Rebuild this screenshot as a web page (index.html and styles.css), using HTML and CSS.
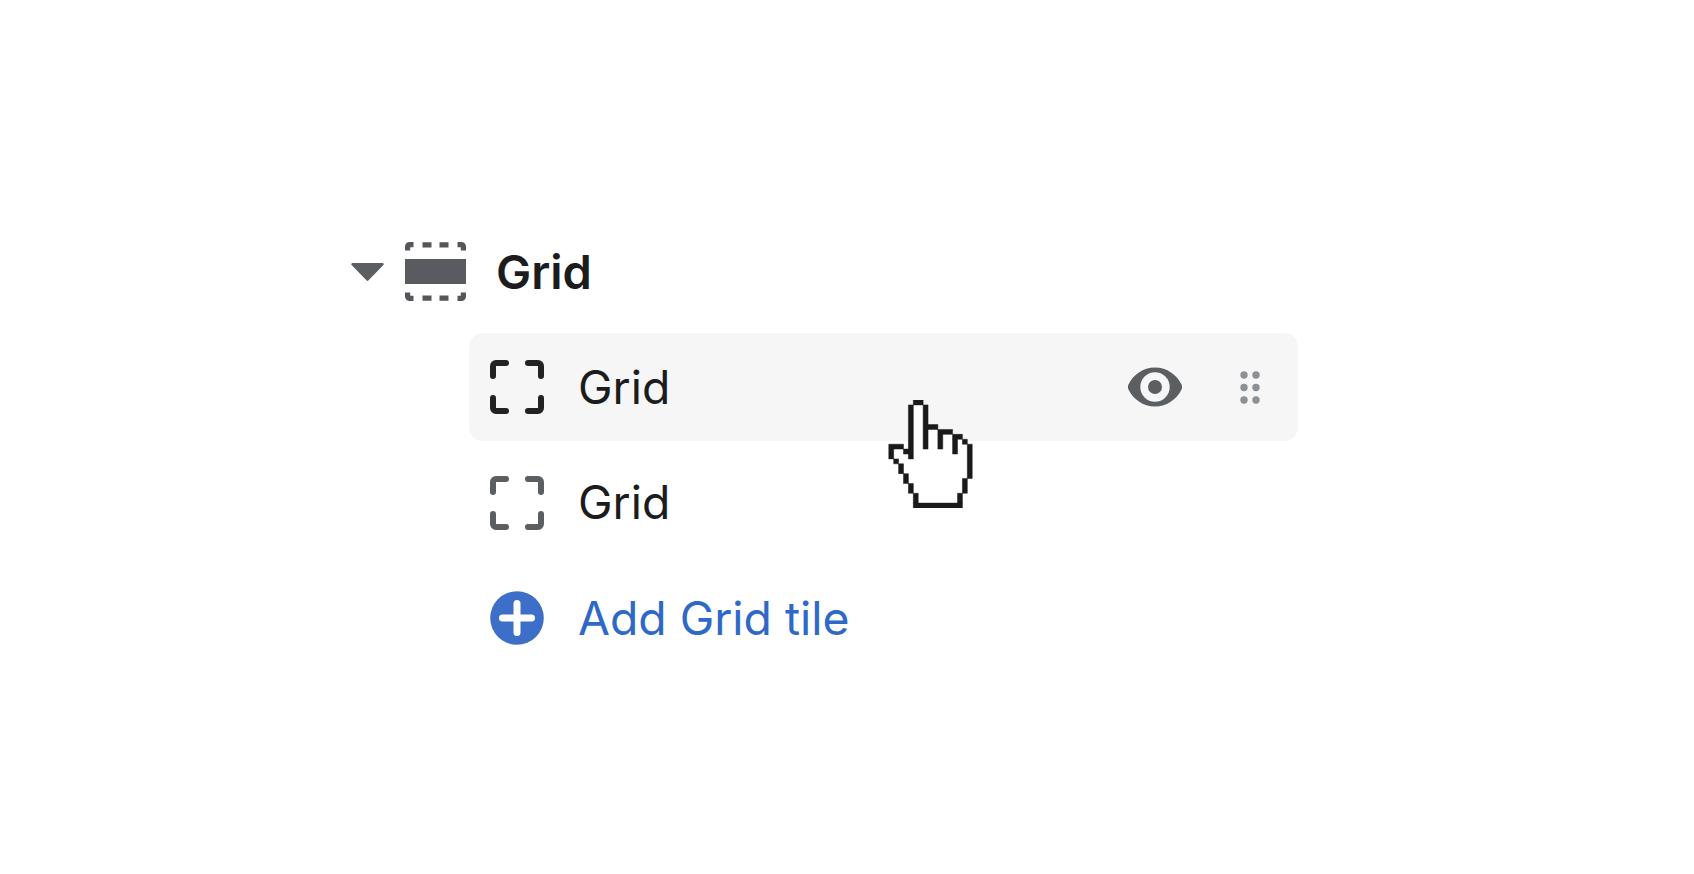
FILE: index.html
```html
<!DOCTYPE html>
<html lang="en">
<head>
<meta charset="utf-8">
<title>Grid</title>
<link rel="stylesheet" href="styles.css">
</head>
<body>
<main class="tree">
  <div class="section">
    <svg class="caret" viewBox="0 0 33 18" aria-hidden="true"><path d="M1.500 0h30a1.200 1.200 0 0 1 .9 2L17.600 17.300a1.500 1.500 0 0 1-2.200 0L.6 2a1.200 1.200 0 0 1 .9-2z"/></svg>
    <svg class="banner" viewBox="0 0 61 59" aria-hidden="true">
      <rect class="solid" x="0" y="17" width="61" height="25"/>
      <path class="dash" d="M2.600 8.500V4.600a2 2 0 0 1 2-2h3.900M52.500 2.600h3.900a2 2 0 0 1 2 2v3.900M2.600 50.500v3.900a2 2 0 0 0 2 2h3.900M52.500 56.400h3.900a2 2 0 0 0 2-2v-3.900M17.500 2.800h9M34.500 2.800h9M17.500 56.200h9M34.500 56.200h9"/>
    </svg>
    <span class="section-name">Grid</span>
  </div>
  <ul class="rows">
    <li class="row row-hover">
      <svg class="frame frame-dark" viewBox="0 0 54 54" aria-hidden="true"><path d="M3 16V6a3 3 0 0 1 3-3h10M38 3h10a3 3 0 0 1 3 3v10M3 38v10a3 3 0 0 0 3 3h10M38 51h10a3 3 0 0 0 3-3V38"/></svg>
      <span class="row-label">Grid</span>
      <div class="actions">
        <svg class="eye" viewBox="0 0 54 40" aria-hidden="true">
          <path class="eye-shape" d="M.5 17.500C5 8 15 .5 27 .5S49 8 53.500 17.500a5.500 5.500 0 0 1 0 5C49 32 39 39.500 27 39.500S5 32 .5 22.500a5.500 5.500 0 0 1 0-5z"/>
          <circle class="eye-ring" cx="27" cy="20" r="14.700"/>
          <circle class="eye-shape" cx="27" cy="20" r="7"/>
        </svg>
        <svg class="drag" viewBox="0 0 20 33" aria-hidden="true">
          <circle cx="4" cy="4" r="3.700"/><circle cx="16" cy="4" r="3.700"/>
          <circle cx="4" cy="16.500" r="3.700"/><circle cx="16" cy="16.500" r="3.700"/>
          <circle cx="4" cy="29" r="3.700"/><circle cx="16" cy="29" r="3.700"/>
        </svg>
      </div>
    </li>
    <li class="row">
      <svg class="frame frame-grey" viewBox="0 0 54 54" aria-hidden="true"><path d="M3 16V6a3 3 0 0 1 3-3h10M38 3h10a3 3 0 0 1 3 3v10M3 38v10a3 3 0 0 0 3 3h10M38 51h10a3 3 0 0 0 3-3V38"/></svg>
      <span class="row-label">Grid</span>
    </li>
    <li class="row">
      <svg class="plus" viewBox="0 0 54 54" aria-hidden="true">
        <circle class="plus-disc" cx="27" cy="27" r="26.800"/>
        <path class="plus-mark" d="M27 12.500v29M12.500 27h29"/>
      </svg>
      <span class="row-label row-link">Add Grid tile</span>
    </li>
  </ul>
  <svg class="cursor" viewBox="0 0 17 22" aria-hidden="true">
    <path class="cursor-fill" d="M5 0h2v5h3v1h3v1h2v1h1v1h1v7h-1v3h-1v3H5v-3H4v-2H3v-2H2v-2H1v-1H0V9h4V1h1z"/>
    <path class="cursor-line" d="M5 0h2v1H5zM4 1h1v11H4zM7 1h1v9H7zM8 5h2v1H8zM10 6h3v1h-3zM10 7h1v3h-1zM13 7h2v1h-2zM13 8h1v3h-1zM15 8h1v1h-1zM16 9h1v7h-1zM15 16h1v3h-1zM14 19h1v2h-1zM5 21h10v1H5zM5 19h1v2H5zM4 17h1v2H4zM3 15h1v2H3zM2 13h1v2H2zM1 12h1v1H1zM0 9h1v3H0zM1 9h2v1H1zM3 10h1v1H3z"/>
  </svg>
</main>
</body>
</html>
```
FILE: styles.css
```css
* { box-sizing: border-box; }

html, body {
  margin: 0;
  height: 100%;
  background: #fff;
}

body {
  font-family: Inter, "Liberation Sans", sans-serif;
  color: #1c1c1e;
  overflow: hidden;
}

.tree {
  position: relative;
  height: 874px;
  padding: 217px 0 0 351px;
}

.section {
  display: flex;
  align-items: center;
  height: 108px;
  margin-bottom: 8px;
}

.caret {
  width: 33px;
  height: 18px;
  margin: 2px 21px 0 0;
  fill: #5c5f62;
}

.banner {
  width: 61px;
  height: 59px;
  margin-right: 30px;
}

.solid { fill: #5a5b60; }

.dash {
  fill: none;
  stroke: #55565b;
  stroke-width: 5.200;
}

.section-name {
  font-size: 47px;
  font-weight: 600;
  line-height: 1;
}

.rows {
  list-style: none;
  margin: 0 0 0 118px;
  padding: 0;
  width: 829px;
  display: flex;
  flex-direction: column;
  gap: 7.500px;
}

.row {
  display: flex;
  align-items: center;
  height: 108px;
  padding: 0 38px 0 21px;
  border-radius: 14px;
}

.row-hover { background: #f6f6f7; }

.frame, .plus {
  width: 54px;
  height: 54px;
  margin-right: 34px;
  flex: none;
}

.frame path {
  fill: none;
  stroke-width: 6;
  stroke-linecap: round;
}

.frame-dark path { stroke: #202223; }
.frame-grey path { stroke: #5c5f62; }

.row-label {
  font-size: 46.300px;
  font-weight: 400;
  line-height: 1;
}

.row-link { color: #2f69c8; }

.plus-disc { fill: #3d6fc9; }

.plus-mark {
  fill: none;
  stroke: #fff;
  stroke-width: 7;
  stroke-linecap: round;
}

.actions {
  display: flex;
  align-items: center;
  gap: 58px;
  margin-left: auto;
}

.eye {
  width: 54px;
  height: 40px;
}

.eye-shape { fill: #5c5f62; }
.eye-ring { fill: #f6f6f7; }

.drag {
  width: 20px;
  height: 33px;
  fill: #8c9196;
}

.cursor {
  position: absolute;
  left: 888px;
  top: 400px;
  width: 85px;
  height: 108px;
}

.cursor-fill { fill: #fff; }

.cursor-line {
  fill: #1a1a1a;
  stroke: #1a1a1a;
  stroke-width: 0.100;
}
```
